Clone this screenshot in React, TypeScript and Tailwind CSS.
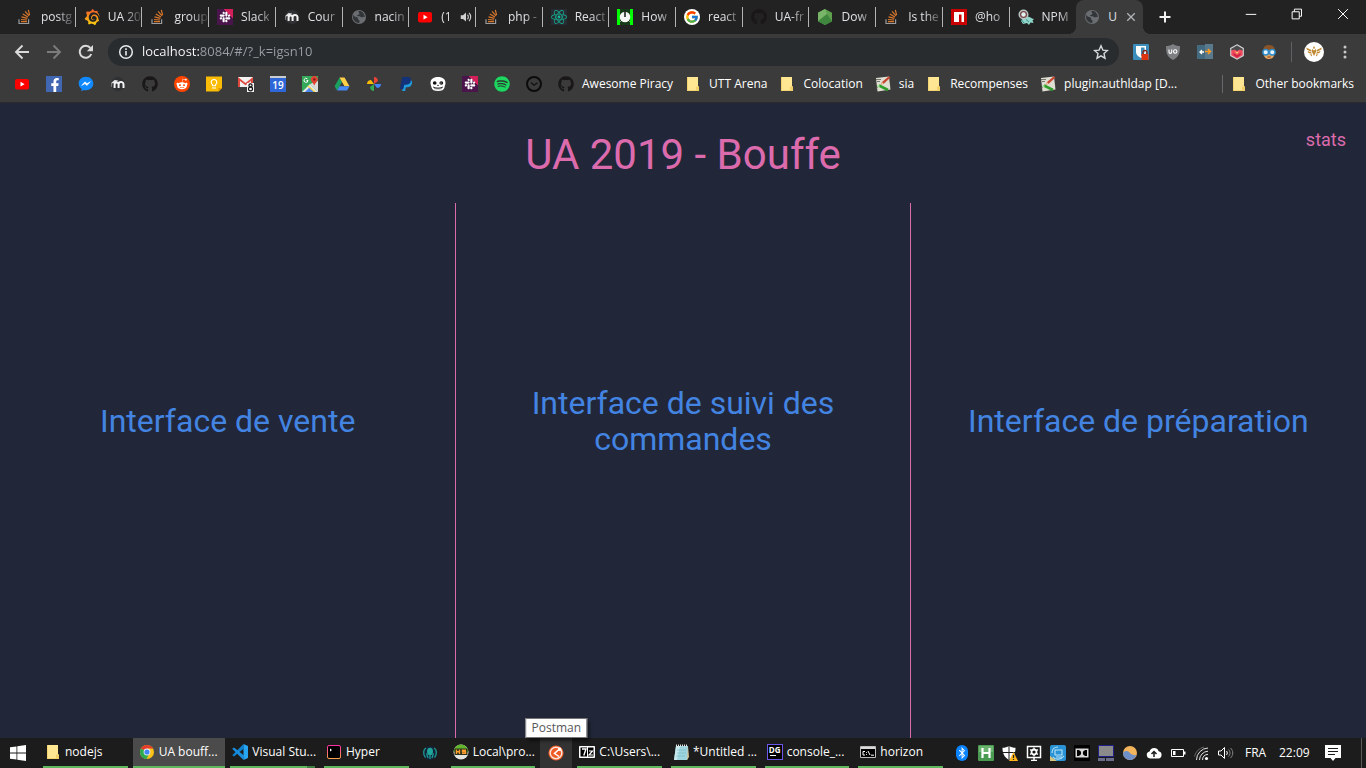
import type { ReactNode } from 'react';
import { FcGoogle } from 'react-icons/fc';
import { FaFacebookF, FaGithub, FaReact, FaRedditAlien, FaSlack, FaSpotify, FaBluetoothB } from 'react-icons/fa';
import { SiGrafana } from 'react-icons/si';

const UI_FONT = "font-['Open_Sans','Noto_Sans',sans-serif]";

function Svg({ children, className = 'size-4' }: { children: ReactNode; className?: string }) {
  return (
    <svg viewBox="0 0 16 16" className={`${className} shrink-0`} aria-hidden="true">
      {children}
    </svg>
  );
}

/* ---------- Favicons ---------- */

const StackOverflow = () => (
  <Svg>
    <path d="M2 10.3v4.2h9.6v-4.2" fill="none" stroke="#9a9c9f" strokeWidth="1.2" />
    <path
      d="M4 12.6h6M4 10.5l6 .5M4.5 7.9l5.9 1.5M5.8 4.9l5.2 3M8.1 2.3l3.9 4.5M11.3 .8l1.3 5.4"
      stroke="#d9772b"
      strokeWidth="1.2"
    />
  </Svg>
);

const Grafana = () => (
  <>
    <svg width="0" height="0" className="absolute" aria-hidden="true">
      <linearGradient id="grafana" x1="0" y1="0" x2="0" y2="1">
        <stop offset="0" stopColor="#f0582a" />
        <stop offset="1" stopColor="#fbd20d" />
      </linearGradient>
    </svg>
    <SiGrafana className="size-4 shrink-0 fill-[url(#grafana)]" />
  </>
);

const SlackIcon = () => (
  <span className="grid size-4 shrink-0 place-items-center bg-[linear-gradient(45deg,#4a154b_70%,#d3205a_70%)]">
    <FaSlack className="size-3 text-white" />
  </span>
);

const Moodle = () => (
  <Svg>
    <circle cx="8" cy="8" r="7" fill="#303134" />
    <path d="M.6 7.4 4.6 4l3.6.6-3 2.4z" fill="#e4e4e4" />
    <path
      d="M4.6 12V8.4a2 2 0 0 1 4 0V12M8.6 12V8.4a2.4 2.4 0 0 1 4.9 0V12"
      fill="none"
      stroke="#f4f4f4"
      strokeWidth="2"
    />
    <path d="M1.6 7.6v3.2" stroke="#aaa" strokeWidth=".7" />
  </Svg>
);

const Globe = () => (
  <Svg>
    <circle cx="8" cy="8" r="7" fill="#6a6d71" />
    <path
      d="M2 5.2C3 8 4.600 7.700 6 8.200c1.600.6.4 2.200 2 3 .8.5.8 1.700 0 2.700-3.300-.2-6-2.800-6-6zM7.500 1.900c-.6 1.500 1.400 1.500.8 3-.5 1.100-2.300.6-2.500 1.900 1.400.9 2.700-.1 3.700.9.900 1 2.700.3 4.300.300-.1-3-2-5.300-4.300-6.100z"
      fill="#333639"
    />
  </Svg>
);

const YouTube = () => (
  <Svg>
    <rect x="1" y="3" width="14" height="10.400" rx="2" fill="#f00" />
    <path d="M6.500 5.800v4.800L10.600 8.200z" fill="#fff" />
  </Svg>
);

const ReactIcon = () => (
  <span className="grid size-4 shrink-0 place-items-center bg-[#282c34]">
    <FaReact className="size-4 text-[#13b795]" />
  </span>
);

const PowerIcon = () => (
  <Svg>
    <path d="M0 0h16v16H0z" fill="#0f0" />
    <path d="M3 0h10v16H3z" fill="#163a18" />
    <circle cx="8" cy="8" r="5.300" fill="#f5f5f5" />
    <path d="M7.200 1h1.600v7H7.200z" fill="#222" />
    <path d="M3.500 12.500 5 11M12.500 12.500 11 11" stroke="#fff" />
  </Svg>
);

const GitHub = () => <FaGithub className="size-4 shrink-0 text-[#191717]" />;

const NodeJs = () => (
  <Svg>
    <path d="M8 0 15 3.800v8.400L8 16l-7-3.800V3.800z" fill="#5fa04e" />
    <path d="M8 0 1 3.800v8.400L10 5z" fill="#78b568" />
    <path d="M1 12.200 8 16l7-3.800L10 5z" fill="#3f873f" />
  </Svg>
);

const Npm = () => (
  <Svg>
    <path d="M0 0h16v16H0z" fill="#cb0000" />
    <path d="M3 3h10v10h-2.500V5.500H8V13H3z" fill="#fff" />
  </Svg>
);

const Trends = () => (
  <Svg>
    <path d="M5 9c3-2 7-1.500 9 .5l2 .5-1.500 1.500 1 2.500-3-.5L11 16l-2-2-4 1-2-3z" fill="#8fd6ca" />
    <circle cx="5.500" cy="5.500" r="5" fill="#b9c6c8" />
    <circle cx="5.500" cy="5.500" r="3.600" fill="#7d4848" />
    <circle cx="5.500" cy="5.500" r="2.200" fill="#dff1f0" />
    <path d="M8 10.500 11 13M3 10.500 6 14" stroke="#4a8c86" />
  </Svg>
);

const Facebook = () => (
  <span className="flex size-4 shrink-0 items-end justify-end bg-[#4267b2]">
    <FaFacebookF className="size-3.5 text-white" />
  </span>
);

const Messenger = () => (
  <Svg>
    <path d="M8 .8c4.200 0 7.300 2.900 7.300 6.700S12.200 14.200 8 14.200c-.8 0-1.500-.1-2.200-.3L3.500 15.300v-2.500C1.700 11.600.7 9.700.7 7.500.7 3.700 3.800.8 8 .8z" fill="#1089ff" />
    <path d="m3.600 9.500 3.300-3.700 2.100 1.800 3.300-1.800-3.300 3.700-2.100-1.800z" fill="#fff" stroke="#fff" strokeWidth=".5" />
  </Svg>
);

const Reddit = () => (
  <span className="grid size-4 shrink-0 place-items-center rounded-full bg-[#ff4500]">
    <FaRedditAlien className="size-3 text-white" />
  </span>
);

const Keep = () => (
  <Svg>
    <path d="M0 .5h16V12l-3.500 3.500H0z" fill="#fbbc05" />
    <path d="M12.500 15.500V12H16z" fill="#e09b00" />
    <path d="M6.500 9.800V8.600a2.800 2.800 0 1 1 3 0v1.200zM6 12h4" fill="none" stroke="#fff" strokeWidth="1.100" />
  </Svg>
);

const Gmail = () => (
  <Svg>
    <path d="M0 1h15v10H0z" fill="#f2f2f2" />
    <path d="M0 11V1l7.500 6L15 1v10h-2V5L7.500 9.300 2 5v6z" fill="#e04a3f" />
    <path d="M9 7h7v9H9z" fill="#f5f5f5" />
    <ellipse cx="12.500" cy="9.400" rx="1.600" ry="1.500" fill="none" stroke="#111" strokeWidth="1.200" />
    <ellipse cx="12.500" cy="13" rx="2" ry="1.800" fill="none" stroke="#111" strokeWidth="1.200" />
  </Svg>
);

const Calendar = () => (
  <span className="flex size-4 shrink-0 items-end justify-center border-t-2 border-[#c9ccd1] bg-[#2f66d8] text-[10px] leading-[13px] font-semibold text-white">
    19
  </span>
);

const Maps = () => (
  <Svg>
    <path d="M0 0h16v16H0z" fill="#35a85a" />
    <path d="M0 16 8 8l8 8z" fill="#e8e8e8" />
    <path d="M3 16l5-5 5 5z" fill="#4a86f0" />
    <path d="M8 8l8-3v11z" fill="#dcdcdc" />
    <path d="m6 10 7 6" stroke="#fdd54a" strokeWidth="1.500" />
    <path d="M12.300 0c2 0 3.500 1.400 3.500 3.300 0 2.400-2.600 3.500-3.500 6.500-.9-3-3.400-4.100-3.400-6.500C8.900 1.400 10.300 0 12.300 0z" fill="#e34133" />
    <circle cx="12.300" cy="3.400" r="1.200" fill="#7b1f19" />
    <path d="M5.300 2.800A2 2 0 1 0 6 4.500H4.500" fill="none" stroke="#fff" />
  </Svg>
);

const Drive = () => (
  <Svg>
    <path d="M5.500 1.500 8 5.900 3 14.500.6 10.300z" fill="#1aa15f" />
    <path d="M5.500 1.500h5l5 8.700h-5z" fill="#ffcf48" />
    <path d="M5.500 10.200h10L13 14.500H3z" fill="#4688f4" />
  </Svg>
);

const Photos = () => (
  <Svg>
    <path d="M8 8V1c2.600 0 4 2 4 4z" fill="#e94335" />
    <path d="M8 8h7c0 2.600-2 4-4 4z" fill="#4286f5" />
    <path d="M8 8v7c-2.600 0-4-2-4-4z" fill="#34a853" />
    <path d="M8 8H1c0-2.600 2-4 4-4z" fill="#fbbb05" />
  </Svg>
);

const PayPal = () => (
  <Svg>
    <path d="M5.500 4h7.300c1.300.8 1.500 2.200 1.100 3.800-.6 2.400-2.300 3.500-4.800 3.500H7.900L7.200 15H4.200z" fill="#1f9bde" />
    <path d="M4.300 1h5.400c2.600 0 3.700 1.400 3.200 3.800-.5 2.600-2.200 3.900-4.900 3.900H6.300L5.300 13H2z" fill="#12327a" />
  </Svg>
);

const Skull = () => (
  <Svg>
    <path d="M8 1c5 0 7.500 2.500 7.500 6 0 2-.8 2.500-1 4.500-.4 2.500-3 3.500-6.500 3.500s-6.100-1-6.500-3.500C1.300 9.500.5 9 .5 7c0-3.500 2.500-6 7.500-6z" fill="#fff" />
    <ellipse cx="4.700" cy="7" rx="1.900" ry="1.700" fill="#111" />
    <ellipse cx="11.300" cy="7" rx="1.900" ry="1.700" fill="#111" />
    <circle cx="11" cy="7" r=".6" fill="#fff" />
    <path d="M8 8.500 9 10H7z" fill="#111" />
    <path d="M3 11c3 1.400 7 1.400 10 0M5 11.500v1.700M7 12v1.500M9 12v1.500M11 11.500v1.700" fill="none" stroke="#111" strokeWidth=".8" />
  </Svg>
);

const Spotify = () => (
  <span className="grid size-4 shrink-0 place-items-center rounded-full bg-[#2a3a2f]">
    <FaSpotify className="size-4 text-[#1ed760]" />
  </span>
);

const ClockMark = () => (
  <Svg>
    <circle cx="8" cy="8" r="7" fill="none" stroke="#0c0c0c" strokeWidth="2" />
    <path d="m5 6.500 3 2.700 3.500-2.500" fill="none" stroke="#111" strokeWidth="1.200" />
  </Svg>
);

const Folder = () => (
  <Svg>
    <path d="M2 1h11v9.500h1V15H2z" fill="#ffe693" />
    <path d="M11 15v-4.500h3V15z" fill="#f2d06a" />
    <path d="M2 14.500h12M2.500 1v14" stroke="#f0cf68" strokeWidth=".8" />
  </Svg>
);

const DokuWiki = () => (
  <Svg>
    <path d="M1 2 14 .5l1.500 13-13 2z" fill="#dedfd2" />
    <path d="M1 3.500h5M2 5.500h3M1.500 12 5 9" stroke="#77776d" />
    <path d="M15.500 1.500 9 7.500 5.500 9 7 6l6.500-5.500z" fill="#c8452f" />
    <path d="m5.500 9 1.500-3 1.500 1.800z" fill="#e9c9a0" />
    <path d="m4 9.500 9 4.500" stroke="#2f9e2a" strokeWidth="2.600" />
    <path d="m2.500 10 2 .5" stroke="#9be08f" strokeWidth="2" />
  </Svg>
);

/* ---------- Tabs ---------- */

type Tab = { icon: ReactNode; label: string; audio?: boolean };

const tabs: Tab[] = [
  { icon: <StackOverflow />, label: 'postg' },
  { icon: <Grafana />, label: 'UA 20' },
  { icon: <StackOverflow />, label: 'group' },
  { icon: <SlackIcon />, label: 'Slack' },
  { icon: <Moodle />, label: 'Cour' },
  { icon: <Globe />, label: 'nacin' },
  { icon: <YouTube />, label: '(1', audio: true },
  { icon: <StackOverflow />, label: 'php -' },
  { icon: <ReactIcon />, label: 'React' },
  { icon: <PowerIcon />, label: 'How' },
  { icon: <FcGoogle className="size-4 shrink-0 rounded-full bg-white p-px" />, label: 'react' },
  { icon: <GitHub />, label: 'UA-fr' },
  { icon: <NodeJs />, label: 'Dow' },
  { icon: <StackOverflow />, label: 'Is the' },
  { icon: <Npm />, label: '@ho' },
  { icon: <Trends />, label: 'NPM' },
];

function TabStrip() {
  return (
    <div className="flex h-[34px] bg-[#222222] text-[12px] text-[#dfe1e5]">
      <div role="tablist" className="grid min-w-0 flex-1 grid-cols-[repeat(17,minmax(0,1fr))] pl-[9px]">
        {tabs.map((tab, i) => (
          <button key={i} role="tab" aria-selected={false} className="flex items-center">
            <span
              className={`flex h-5 w-full items-center gap-2 pl-2 ${
                i === tabs.length - 1 ? '' : 'border-r border-[#b4b4b4]'
              }`}
            >
              {tab.icon}
              <span className="[mask-image:linear-gradient(90deg,#000_16px,transparent_36px)] text-left whitespace-nowrap">
                {tab.label}
              </span>
              {tab.audio && (
                <Svg className="size-3">
                  <path d="M1 5.500h3L8 2v12L4 10.500H1z" fill="#d0d0d0" />
                  <path d="M10 5c1.500 1.500 1.500 4.500 0 6M12 2.500c3 3 3 8 0 11" fill="none" stroke="#d0d0d0" strokeWidth="1.500" />
                </Svg>
              )}
            </span>
          </button>
        ))}
        <div role="tab" aria-selected className="relative flex items-center gap-2 rounded-t-lg bg-[#3b3b3b] pl-2">
          <Globe />
          <span>U</span>
          <button aria-label="Close tab">
            <Svg className="size-3">
              <path d="m3 3 10 10M13 3 3 13" stroke="#b0b3b7" strokeWidth="1.800" />
            </Svg>
          </button>
          <i className="absolute bottom-0 -left-2 size-2 bg-[radial-gradient(circle_at_0_0,transparent_8px,#3b3b3b_8px)]" />
          <i className="absolute -right-2 bottom-0 size-2 bg-[radial-gradient(circle_at_100%_0,transparent_8px,#3b3b3b_8px)]" />
        </div>
      </div>
      <div className="flex w-[223px] shrink-0 justify-between">
        <button aria-label="New tab" className="pl-[14px]">
          <Svg>
            <path d="M8 2.500v11M2.500 8h11" stroke="#f0f0f0" strokeWidth="2" />
          </Svg>
        </button>
        <div className="flex h-7">
          <button aria-label="Minimize" className="grid w-[46px] place-items-center">
            <Svg className="size-3">
              <path d="M1 8.500h14" stroke="#fff" strokeWidth="1.300" />
            </Svg>
          </button>
          <button aria-label="Restore" className="grid w-[46px] place-items-center">
            <Svg className="size-3">
              <path d="M1.500 5h9.500v9.500H1.500zM4.500 5V1.500H14V11h-3" fill="none" stroke="#fff" strokeWidth="1.300" />
            </Svg>
          </button>
          <button aria-label="Close" className="grid w-[46px] place-items-center">
            <Svg className="size-3">
              <path d="m1.500 1.500 13 13m0-13-13 13" stroke="#fff" strokeWidth="1.300" />
            </Svg>
          </button>
        </div>
      </div>
    </div>
  );
}

/* ---------- Toolbar ---------- */

function Toolbar() {
  return (
    <div className="flex h-9 items-center bg-[#3b3b3b] pr-[13px] pl-[14px]">
      <div className="flex w-[94px] gap-4">
        <button aria-label="Back">
          <Svg>
            <path d="M15 8H2.500M8.500 1.500 2 8l6.500 6.500" fill="none" stroke="#dadada" strokeWidth="1.900" />
          </Svg>
        </button>
        <button aria-label="Forward">
          <Svg>
            <path d="M1 8h12.500M7.500 1.500 14 8l-6.500 6.500" fill="none" stroke="#7c7c7c" strokeWidth="1.900" />
          </Svg>
        </button>
        <button aria-label="Reload">
          <Svg>
            <path d="M13.300 10A6 6 0 1 1 12.400 4" fill="none" stroke="#dadada" strokeWidth="2" />
            <path d="M15 1v6.200H8.800z" fill="#dadada" />
          </Svg>
        </button>
      </div>
      <div className="flex h-7 min-w-0 flex-1 items-center gap-2 rounded-full bg-[#282c2f] px-[10px]">
        <Svg>
          <circle cx="8" cy="8" r="6.300" fill="none" stroke="#e8eaed" strokeWidth="1.500" />
          <path d="M8 7v4.500M8 4.300v1.600" stroke="#e8eaed" strokeWidth="1.600" />
        </Svg>
        <input
          aria-label="Address"
          defaultValue="localhost:8084/#/?_k=igsn10"
          className="min-w-0 flex-1 [background-image:linear-gradient(90deg,#ffffff_58px,#9aa0a6_58px)] bg-clip-text text-[13px] text-transparent outline-none"
        />
        <button aria-label="Bookmark this page">
          <Svg>
            <path
              d="m8 1.800 1.900 4.300 4.600.4-3.500 3.100 1 4.600L8 11.800l-4 2.400 1-4.600L1.500 6.500l4.600-.4z"
              fill="none"
              stroke="#d6d8da"
              strokeWidth="1.400"
            />
          </Svg>
        </button>
      </div>
      <div className="flex items-center gap-4 pl-[14px]">
        <button aria-label="Password manager">
          <Svg>
            <rect width="16" height="16" rx="1" fill="#3c8dbc" />
            <path d="M3 2h10v6c0 3-3 5-5 6-2-1-5-3-5-6z" fill="#fff" />
            <path d="M8 3.500h3.500V8c0 2-2 3.500-3.500 4z" fill="#3c8dbc" />
            <path d="M8.500 10h7v6h-7z" fill="#dd3311" />
            <path d="M10 10V8.500a2 2 0 0 1 4 0V10" fill="none" stroke="#8c2412" strokeWidth="1.300" />
          </Svg>
        </button>
        <button aria-label="Content blocker">
          <Svg>
            <path d="M8 0c2 1.500 4.500 2 7 2 0 7-1 11-7 14C2 13 1 9 1 2c2.500 0 5-.5 7-2z" fill="#7d7f82" />
            <path d="M4 5.500V8a1.300 1.300 0 0 0 2.700 0V5.500" fill="none" stroke="#fff" strokeWidth="1.100" />
            <circle cx="10.200" cy="7.500" r="1.700" fill="none" stroke="#fff" strokeWidth="1.100" />
          </Svg>
        </button>
        <button aria-label="Redirector">
          <Svg>
            <path d="M0 1h8v14H0z" fill="#446a80" />
            <path d="M8 0h8v15H8z" fill="#587a8c" />
            <path d="M3 8h4M5 6 3 8l2 2" fill="none" stroke="#fff" strokeWidth="1.300" />
            <path d="M8 7.500h5M11 5l2.500 2.500L11 10" fill="none" stroke="#ff9a1f" strokeWidth="1.500" />
          </Svg>
        </button>
        <button aria-label="Hexagon extension">
          <Svg>
            <path d="m8 .8 6.300 3.600v7.200L8 15.200l-6.300-3.600V4.400z" fill="#4a4b4d" />
            <path d="m2 6.500 3.500-1L8 7l2.500-1.500 3.500 1v5L8 15l-6-3.500z" fill="#ee4b5e" />
            <path d="m4.500 9 3.500 2.500L11.500 9v2L8 13.500 4.500 11z" fill="#c9223f" />
            <path d="m5.500 7 2.500 1.200L10.500 7 8 10z" fill="#ffcf70" />
            <path d="m8 .8 6.300 3.600v7.200L8 15.200l-6.300-3.600V4.400z" fill="none" stroke="#d3d5d8" strokeWidth="1.100" />
          </Svg>
        </button>
        <button aria-label="Reader extension">
          <Svg>
            <path d="M2 7c0-4 2.500-6 6-6s6 2 6 6z" fill="#8a5428" />
            <path d="M3 6h10v5c0 2.500-2.500 4-5 4s-5-1.500-5-4z" fill="#e5a45f" />
            <circle cx="4.700" cy="8.200" r="2.800" fill="#e9f4fb" stroke="#2c8bc9" strokeWidth="1.500" />
            <circle cx="11.300" cy="8.200" r="2.800" fill="#e9f4fb" stroke="#2c8bc9" strokeWidth="1.500" />
            <path d="M6.500 13h3" stroke="#8a3a1c" />
          </Svg>
        </button>
      </div>
      <div className="ml-[14px] flex items-center gap-3 border-l border-[#5f6164] pl-3">
        <button aria-label="Profile" className="grid size-5 place-items-center rounded-full bg-white">
          <Svg>
            <path d="m8 2 1.300 2.400H6.700zM6 5l2 1.500L10 5v3l-2 4-2-4zM5.500 6 0 3.500l1 2.300 4.300 1.900zM10.500 6 16 3.500l-1 2.300-4.300 1.900zM5.300 8.200 1.500 7l1 2 3.200.8zM10.700 8.200 14.500 7l-1 2-3.200.8zM6 10.500l-2.500-.2L6 12.500zM10 10.500l2.500-.2L10 12.500z" fill="#c08a35" />
          </Svg>
        </button>
        <button aria-label="Menu" className="pl-px">
          <Svg>
            <circle cx="8" cy="3" r="1.500" fill="#c8c8c8" />
            <circle cx="8" cy="8" r="1.500" fill="#c8c8c8" />
            <circle cx="8" cy="13" r="1.500" fill="#c8c8c8" />
          </Svg>
        </button>
      </div>
    </div>
  );
}

/* ---------- Bookmarks ---------- */

const iconBookmarks: { icon: ReactNode; name: string }[] = [
  { icon: <YouTube />, name: 'YouTube' },
  { icon: <Facebook />, name: 'Facebook' },
  { icon: <Messenger />, name: 'Messenger' },
  { icon: <Moodle />, name: 'Moodle' },
  { icon: <GitHub />, name: 'GitHub' },
  { icon: <Reddit />, name: 'Reddit' },
  { icon: <Keep />, name: 'Keep' },
  { icon: <Gmail />, name: 'Gmail' },
  { icon: <Calendar />, name: 'Calendar' },
  { icon: <Maps />, name: 'Maps' },
  { icon: <Drive />, name: 'Drive' },
  { icon: <Photos />, name: 'Photos' },
  { icon: <PayPal />, name: 'PayPal' },
  { icon: <Skull />, name: 'Skull' },
  { icon: <SlackIcon />, name: 'Slack' },
  { icon: <Spotify />, name: 'Spotify' },
  { icon: <ClockMark />, name: 'Clock' },
];

const labelledBookmarks: { icon: ReactNode; label: string }[] = [
  { icon: <GitHub />, label: 'Awesome Piracy' },
  { icon: <Folder />, label: 'UTT Arena' },
  { icon: <Folder />, label: 'Colocation' },
  { icon: <DokuWiki />, label: 'sia' },
  { icon: <Folder />, label: 'Recompenses' },
  { icon: <DokuWiki />, label: 'plugin:authldap [D...' },
];

function BookmarksBar() {
  return (
    <nav aria-label="Bookmarks" className="flex h-8 items-center justify-between bg-[#3b3b3b] pr-3 pb-1 pl-[14px] text-[12px] text-white">
      <div className="flex items-center gap-4">
        {iconBookmarks.map((b) => (
          <a key={b.name} href="#" aria-label={b.name}>
            {b.icon}
          </a>
        ))}
        <div className="flex items-center gap-3">
          {labelledBookmarks.map((b) => (
            <a key={b.label} href="#" className="flex items-center gap-2 whitespace-nowrap">
              {b.icon}
              {b.label}
            </a>
          ))}
        </div>
      </div>
      <a href="#" className="flex items-center gap-2 border-l border-[#66686b] pl-2 whitespace-nowrap">
        <Folder />
        Other bookmarks
      </a>
    </nav>
  );
}

/* ---------- Page ---------- */

const sections = ['Interface de vente', 'Interface de suivi des commandes', 'Interface de préparation'];

function Page() {
  return (
    <main className="flex flex-1 flex-col border-t border-[#2b2b2e] bg-[#212738] font-[Roboto,sans-serif]">
      <header className="grid h-[100px] grid-cols-[1fr_auto_1fr] px-5">
        <h1 className="col-start-2 pt-7 text-[42px] leading-[48px] text-[#dc6bad]">UA 2019 - Bouffe</h1>
        <a href="#stats" className="justify-self-end pt-[25px] text-[18px] leading-6 text-[#dc6bad]">
          stats
        </a>
      </header>
      <div className="grid flex-1 grid-cols-3">
        {sections.map((s, i) => (
          <a
            key={s}
            href="#section"
            className={`flex items-center justify-center px-8 pb-[100px] text-center text-[32px] leading-9 text-[#4384e2] ${
              i === 1 ? 'border-x border-[#dc6bad]' : ''
            }`}
          >
            {s}
          </a>
        ))}
      </div>
    </main>
  );
}

/* ---------- Taskbar ---------- */

const Chrome = () => (
  <Svg>
    <circle cx="8" cy="8" r="7" fill="#fbc116" />
    <path d="M8 8 1.900 4.500A7 7 0 0 1 14.100 4.600H8z" fill="#e33b2e" />
    <path d="M8 8 1.900 4.500A7 7 0 0 0 7.500 15l3-5.500z" fill="#2da94f" />
    <circle cx="8" cy="8" r="3.400" fill="#f4f4f4" />
    <circle cx="8" cy="8" r="2.600" fill="#4285f4" />
  </Svg>
);

const VsCode = () => (
  <Svg>
    <path d="m11.500 0 4.500 2v12l-4.500 2z" fill="#27a5f2" />
    <path d="M11.500 0 12 4.500 2 12.500.2 11.200z" fill="#0f7fcb" />
    <path d="M11.500 16 12 11.500 2 3.500.2 4.800z" fill="#1a8ddb" />
  </Svg>
);

const Hyper = () => (
  <Svg>
    <linearGradient id="hyper" x1="0" y1="0" x2="0" y2="1">
      <stop offset="0" stopColor="#ff2ea6" />
      <stop offset="1" stopColor="#ffa14a" />
    </linearGradient>
    <rect x="1.500" y="1.500" width="13" height="13" rx="1.500" fill="#000" stroke="url(#hyper)" />
    <path d="M4 4.500 6 6 4 7.500z" fill="#fff" />
  </Svg>
);

const Kraken = () => (
  <Svg>
    <circle cx="8" cy="8" r="7" fill="#16243a" />
    <path d="M3.500 12.500C.5 9 1.500 4 4 3M12.500 12.500c3-3.500 2-8.500-.5-9.500M6 13c-.5-2-.8-3-1.500-4.500M10 13c.5-2 .8-3 1.500-4.500M8 9v5" fill="none" stroke="#1b9c92" strokeWidth="1.300" />
    <ellipse cx="8" cy="6.500" rx="3" ry="3.800" fill="#1fa69b" />
  </Svg>
);

const HeidiSql = () => (
  <Svg>
    <circle cx="8" cy="8" r="7.500" fill="#e4e4e0" />
    <path d="M.6 8a7.400 7.400 0 0 1 14.800 0z" fill="#62b52d" />
    <path d="M1.500 4.500h13v6.500h-13z" fill="#26311b" />
    <path d="M3.500 5.500v4.500M6.500 5.500v4.500M3.500 7.800h3M13 6.200H9.500v1.500h3v1.700H9" fill="none" stroke="#ff9d2e" strokeWidth="1.400" />
  </Svg>
);

const Postman = () => (
  <Svg>
    <circle cx="8" cy="8" r="7.600" fill="#ef5b25" />
    <circle cx="8" cy="8" r="5.800" fill="none" stroke="#fbe6dd" strokeWidth="1.400" />
    <path d="m12.500 3-6 5.500 4.500 3" fill="none" stroke="#fff" strokeWidth="1.500" />
    <circle cx="11.700" cy="4.300" r="1.700" fill="#fff" />
  </Svg>
);

const SevenZip = () => (
  <Svg>
    <path d="M.5 2.500h15v11H.5z" fill="#fff" stroke="#fff" />
    <path d="M1.500 3.500h6.500v9H1.500z" fill="#000" />
    <path d="M3 5h4L4.800 11.500" fill="none" stroke="#fff" strokeWidth="1.400" />
    <path d="M9 3.500h5.500v9H9z" fill="#000" />
    <path d="M10 7h3.500L10 11h4" fill="none" stroke="#fff" strokeWidth="1.200" />
  </Svg>
);

const Notepad = () => (
  <Svg>
    <path d="M3 2h12v12l-1 2H1z" fill="#9ed4dd" />
    <path d="M3 2h4L4 16H1z" fill="#c7e9ee" />
    <path d="m15 2 1 11-2 3z" fill="#d9bf91" />
    <path d="M3.500.5v2M5.500.5v2M7.500.5v2M9.500.5v2M11.500.5v2M13.500.5v2" stroke="#e4e4e4" />
    <path d="M4 6h9M4 9h9M3 12h9" stroke="#74b6c4" strokeWidth=".6" />
  </Svg>
);

const DataGrip = () => (
  <span className="flex size-4 shrink-0 flex-col border border-[#6b57e8] bg-black px-px text-[8px] leading-[10px] font-bold text-white">
    DG
    <i className="ml-px h-px w-[6px] bg-white" />
  </span>
);

const Cmd = () => (
  <Svg>
    <path d="M.5 2.500h15v11H.5z" fill="#000" stroke="#bdbdbd" />
    <path d="M1 3h14v2H1z" fill="#d9d9d9" />
    <path d="M5 7.500H3V11h2M6.500 8v.8M6.500 10v.8M8 7l2 4M11 11.200h3" fill="none" stroke="#fff" />
  </Svg>
);

const TrayBox = ({ children }: { children: ReactNode }) => <span className="grid size-4 place-items-center">{children}</span>;

const trayIcons: ReactNode[] = [
  <span className="grid h-4 w-3 place-items-center rounded-full bg-[#0a84ff]">
    <FaBluetoothB className="size-3 text-white" />
  </span>,
  <Svg>
    <rect width="16" height="16" rx="1" fill="#4b9a51" />
    <path d="M1 1h14v6H1z" fill="#6bb46f" />
    <path d="M4.500 3v10M11.500 3v10M4.500 8h7" stroke="#fff" strokeWidth="2.200" />
  </Svg>,
  <Svg>
    <path d="M7 1c2 1.200 4 1.800 6.500 1.800C13.500 8 12 12 7 15 2 12 .5 8 .5 2.800 3 2.800 5 2.200 7 1z" fill="#fff" />
    <path d="M7 1v14M.5 7.500h13" stroke="#1c1c1c" />
    <path d="m11.500 7 4.500 9H7z" fill="#ffb51b" />
    <path d="M11.500 10v3M11.500 14v1" stroke="#222" strokeWidth="1.200" />
  </Svg>,
  <Svg>
    <path d="M1.500 1.500h13v11h-13zM5 15.500h6M8 12v3" fill="#111" stroke="#fff" strokeWidth="1.500" />
    <circle cx="8" cy="7" r="2.500" fill="none" stroke="#fff" strokeWidth="1.800" />
    <path d="M8 2.500V5M8 9v2.500M4 4.500 6 6M10 8l2 1.500M4 9.500 6 8M10 6l2-1.500" stroke="#fff" strokeWidth="1.300" />
  </Svg>,
  <Svg>
    <rect width="16" height="16" rx="2" fill="#2a93d5" />
    <path d="M2 8c0-4 3-6 6-6M3 12c2 3 8 3 11-1M5 5h7v5H5zM6 12h6" fill="none" stroke="#b7e4f7" strokeWidth="1.100" />
    <path d="M0 11v5h7z" fill="#d6c27c" />
  </Svg>,
  <Svg>
    <path d="M0 0h16v16H0z" fill="#000" />
    <path d="M1.500 3.500h13v9h-13z" fill="#d9d9d9" />
    <path d="M3 5h1.500C8 5.500 8 10.500 4.500 11H3zM13 5h-1.500C8 5.500 8 10.500 11.500 11H13z" fill="#000" />
  </Svg>,
  <Svg>
    <path d="M.5.500h15v11H.5z" fill="#8b8b8b" stroke="#20208a" />
    <path d="M0 13h7v3H0zM8 13h8v3H8z" fill="#6d6d8c" />
  </Svg>,
  <Svg>
    <circle cx="8" cy="8" r="7" fill="#f4b45c" />
    <path d="M1 8c3-3 5-2 7 0s5 3 6.500 1.500C13.500 13 11 15 8 15a7 7 0 0 1-7-7z" fill="#6f8fc9" />
  </Svg>,
  <Svg>
    <path d="M4 13.500a3.600 3.600 0 0 1-.4-7.100 4.700 4.700 0 0 1 9-.2 3.700 3.700 0 0 1-.3 7.300z" fill="#fff" />
    <path d="M8 12V7M5.500 9 8 6.500 10.500 9" fill="none" stroke="#1c1c1c" strokeWidth="1.500" />
  </Svg>,
  <Svg>
    <path d="M1.500 4.500h12v7h-12z" fill="none" stroke="#fff" />
    <path d="M3 6h2.500v4H3zM14 6.500h1.500v3H14z" fill="#fff" />
  </Svg>,
  <Svg>
    <path d="M2.500 15A12 12 0 0 1 14 3M5.500 15A9 9 0 0 1 14 6.200M8.500 15A6 6 0 0 1 14 9.300" fill="none" stroke="#e4e4e4" />
    <path d="M.5 11.500A13 13 0 0 1 10 2" fill="none" stroke="#666" />
    <circle cx="12.500" cy="13.500" r="1.600" fill="#fff" />
  </Svg>,
  <Svg>
    <path d="M.5 6h2.500l3.500-3.500v11L3 10H.5z" fill="none" stroke="#fff" />
    <path d="M8.500 6c1 1.200 1 2.800 0 4" fill="none" stroke="#fff" />
    <path d="M10.500 4.500c2 2 2 5 0 7M12.500 3c3 3 3 7 0 10" fill="none" stroke="#888" />
  </Svg>,
];

type Task = { icon: ReactNode; label?: string; name: string; active?: boolean; grouped?: boolean; tooltip?: boolean };

const tasks: Task[] = [
  { icon: <Folder />, name: 'Explorer', label: 'nodejs' },
  { icon: <Chrome />, name: 'Chrome', label: 'UA bouff...', active: true },
  { icon: <VsCode />, name: 'VS Code', label: 'Visual Stu...', grouped: true },
  { icon: <Hyper />, name: 'Hyper', label: 'Hyper' },
  { icon: <Kraken />, name: 'GitKraken' },
  { icon: <HeidiSql />, name: 'HeidiSQL', label: 'Local\\pro...' },
  { icon: <Postman />, name: 'Postman', tooltip: true },
  { icon: <SevenZip />, name: '7-Zip', label: 'C:\\Users\\...' },
  { icon: <Notepad />, name: 'Notepad', label: '*Untitled ...' },
  { icon: <DataGrip />, name: 'DataGrip', label: 'console_...' },
  { icon: <Cmd />, name: 'Command prompt', label: 'horizon' },
];

function TaskButton({ task }: { task: Task }) {
  if (!task.label) {
    return (
      <button
        aria-label={task.name}
        className={`relative grid place-items-center ${task.tooltip ? 'bg-[#333333]' : ''}`}
      >
        {task.icon}
        {task.tooltip && (
          <span
            role="tooltip"
            className="absolute bottom-[30px] left-1/2 -translate-x-1/2 border border-[#767676] bg-white px-[5px] text-[12px] leading-[18px] text-[#575757] shadow-[3px_3px_3px_rgba(0,0,0,0.5)]"
          >
            {task.name}
          </span>
        )}
      </button>
    );
  }
  return (
    <button className={`flex flex-col ${task.active ? 'bg-[#4b4b4b]' : 'px-1'}`}>
      <span
        className={`flex w-full flex-1 items-center gap-1 whitespace-nowrap ${task.active ? 'pl-[6px]' : 'pl-[2px]'}`}
      >
        {task.icon}
        {task.label}
      </span>
      <span className="flex h-[2px] w-full justify-end bg-[#5fb760]">
        {task.grouped && <i className="w-2 bg-[#3f7f43]" />}
      </span>
    </button>
  );
}

function Taskbar() {
  return (
    <footer className="flex h-[30px] bg-[#1c1c1c] text-[12px] text-white">
      <button aria-label="Start" className="w-[39px] shrink-0 pl-[10px]">
        <Svg>
          <path d="M0 2.300 6.500 1.400v6.100H0zM7.300 1.300 16 0v7.500H7.300zM0 8.400h6.500v6.200L0 13.700zM7.300 8.400H16V16l-8.700-1.300z" fill="#fff" />
        </Svg>
      </button>
      <nav
        aria-label="Running programs"
        className="grid min-w-0 flex-1 grid-cols-[repeat(4,minmax(0,1fr))_32px_minmax(0,1fr)_32px_repeat(4,minmax(0,1fr))] gap-px"
      >
        {tasks.map((t) => (
          <TaskButton key={t.name} task={t} />
        ))}
      </nav>
      <div className="flex w-[419px] shrink-0 items-center pl-[7px]">
        <div className="flex gap-2">
          {trayIcons.map((icon, i) => (
            <TrayBox key={i}>{icon}</TrayBox>
          ))}
        </div>
        <span className="w-[35px] pl-[11px]">FRA</span>
        <time className="ml-[10px] w-[46px]">22:09</time>
        <button aria-label="Notifications">
          <Svg>
            <path d="M0 0h16v13h-5.500L8 16l-2.500-3H0z" fill="#fff" />
            <path d="M3 3.500h10M3 6.500h10M3 9.500h7" stroke="#1c1c1c" />
          </Svg>
        </button>
        <i className="mr-1 ml-auto h-full w-px bg-[#5a5a5a]" />
      </div>
    </footer>
  );
}

export default function App() {
  return (
    <div className={`flex min-h-screen flex-col ${UI_FONT}`}>
      <TabStrip />
      <Toolbar />
      <BookmarksBar />
      <Page />
      <Taskbar />
    </div>
  );
}
